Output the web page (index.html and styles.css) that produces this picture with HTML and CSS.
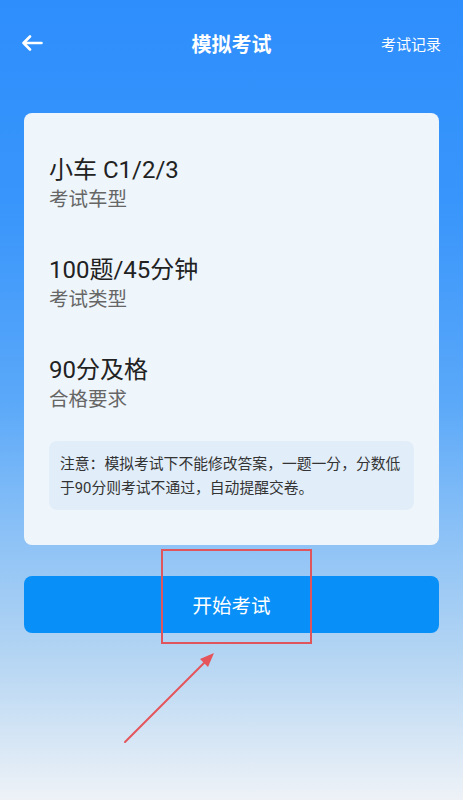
FILE: index.html
```html
<!DOCTYPE html>
<html lang="zh-CN">
<head>
<meta charset="utf-8">
<title>模拟考试</title>
<link rel="stylesheet" href="styles.css">
</head>
<body>
<div class="page">
  <header class="topbar">
    <span class="back">
      <svg width="22" height="16" viewBox="0 0 22 16"><path d="M20.5 8H2.5M9 1.5L2.5 8L9 14.5" fill="none" stroke="#fff" stroke-width="2.6" stroke-linecap="round" stroke-linejoin="round"/></svg>
    </span>
    <h1 class="title">模拟考试</h1>
    <span class="record">考试记录</span>
  </header>

  <section class="card">
    <div class="item">
      <div class="item-title">小车 C1/2/3</div>
      <div class="item-sub">考试车型</div>
    </div>
    <div class="item">
      <div class="item-title">100题/45分钟</div>
      <div class="item-sub">考试类型</div>
    </div>
    <div class="item">
      <div class="item-title">90分及格</div>
      <div class="item-sub">合格要求</div>
    </div>
    <div class="notice">注意：模拟考试下不能修改答案，一题一分，分数低于90分则考试不通过，自动提醒交卷。</div>
  </section>

  <div class="actions">
    <button class="start">开始考试</button>
    <div class="mark-box"></div>
    <svg class="mark-arrow" width="100" height="100" viewBox="0 0 100 100">
      <path d="M3 96L84 15" stroke="#e5545a" stroke-width="2" stroke-linecap="round"/>
      <path d="M92 7L78 13L86 21Z" fill="#e5545a"/>
    </svg>
  </div>
</div>
</body>
</html>
```

FILE: styles.css
```css
* { box-sizing: border-box; }
html, body { margin: 0; padding: 0; }
body {
  font-family: Roboto, "Noto Sans CJK SC", "Noto Sans", sans-serif;
  width: 463px;
  height: 800px;
  overflow: hidden;
}
.page {
  height: 800px;
  background: linear-gradient(180deg, #2e8efc 0%, #3895fb 25%, #5aa8f9 50%, #8fc3f6 68%, #b4d5f3 82%, #eef2f7 100%);
  display: flex;
  flex-direction: column;
}
.topbar {
  height: 86px;
  display: flex;
  align-items: center;
  justify-content: space-between;
  padding: 0 22px 0 21px;
  position: relative;
}
.back { display: flex; width: 60px; }
.title {
  margin: 0;
  font-size: 20px;
  font-weight: 700;
  color: #fff;
  position: absolute;
  left: 0;
  right: 0;
  text-align: center;
  pointer-events: none;
}
.record {
  font-size: 15px;
  color: #fff;
}
.card {
  margin: 27px 24px 0;
  background: #eef5fb;
  border-radius: 8px;
  padding: 42px 25px 35px;
  display: flex;
  flex-direction: column;
  gap: 41px;
}
.item { display: flex; flex-direction: column; gap: 1px; }
.item-title {
  font-size: 24px;
  line-height: 30px;
  color: #222;
}
.item-sub {
  font-size: 19.5px;
  line-height: 28px;
  color: #666;
}
.notice {
  margin-top: -14px;
  background: #e1edf8;
  border-radius: 8px;
  padding: 11px 8px 10px 11px;
  font-size: 14.8px;
  line-height: 24px;
  color: #333;
}
.actions {
  margin: 31px 24px 0;
  position: relative;
}
.start {
  display: block;
  width: 100%;
  height: 57px;
  border: 0;
  border-radius: 8px;
  background: #0890f8;
  color: #fff;
  font-family: inherit;
  font-size: 19.5px;
}
.mark-box {
  position: absolute;
  left: 137px;
  top: -27px;
  width: 151px;
  height: 95px;
  border: 2px solid #e0555b;
}
.mark-arrow {
  position: absolute;
  left: 98px;
  top: 70px;
}
```
